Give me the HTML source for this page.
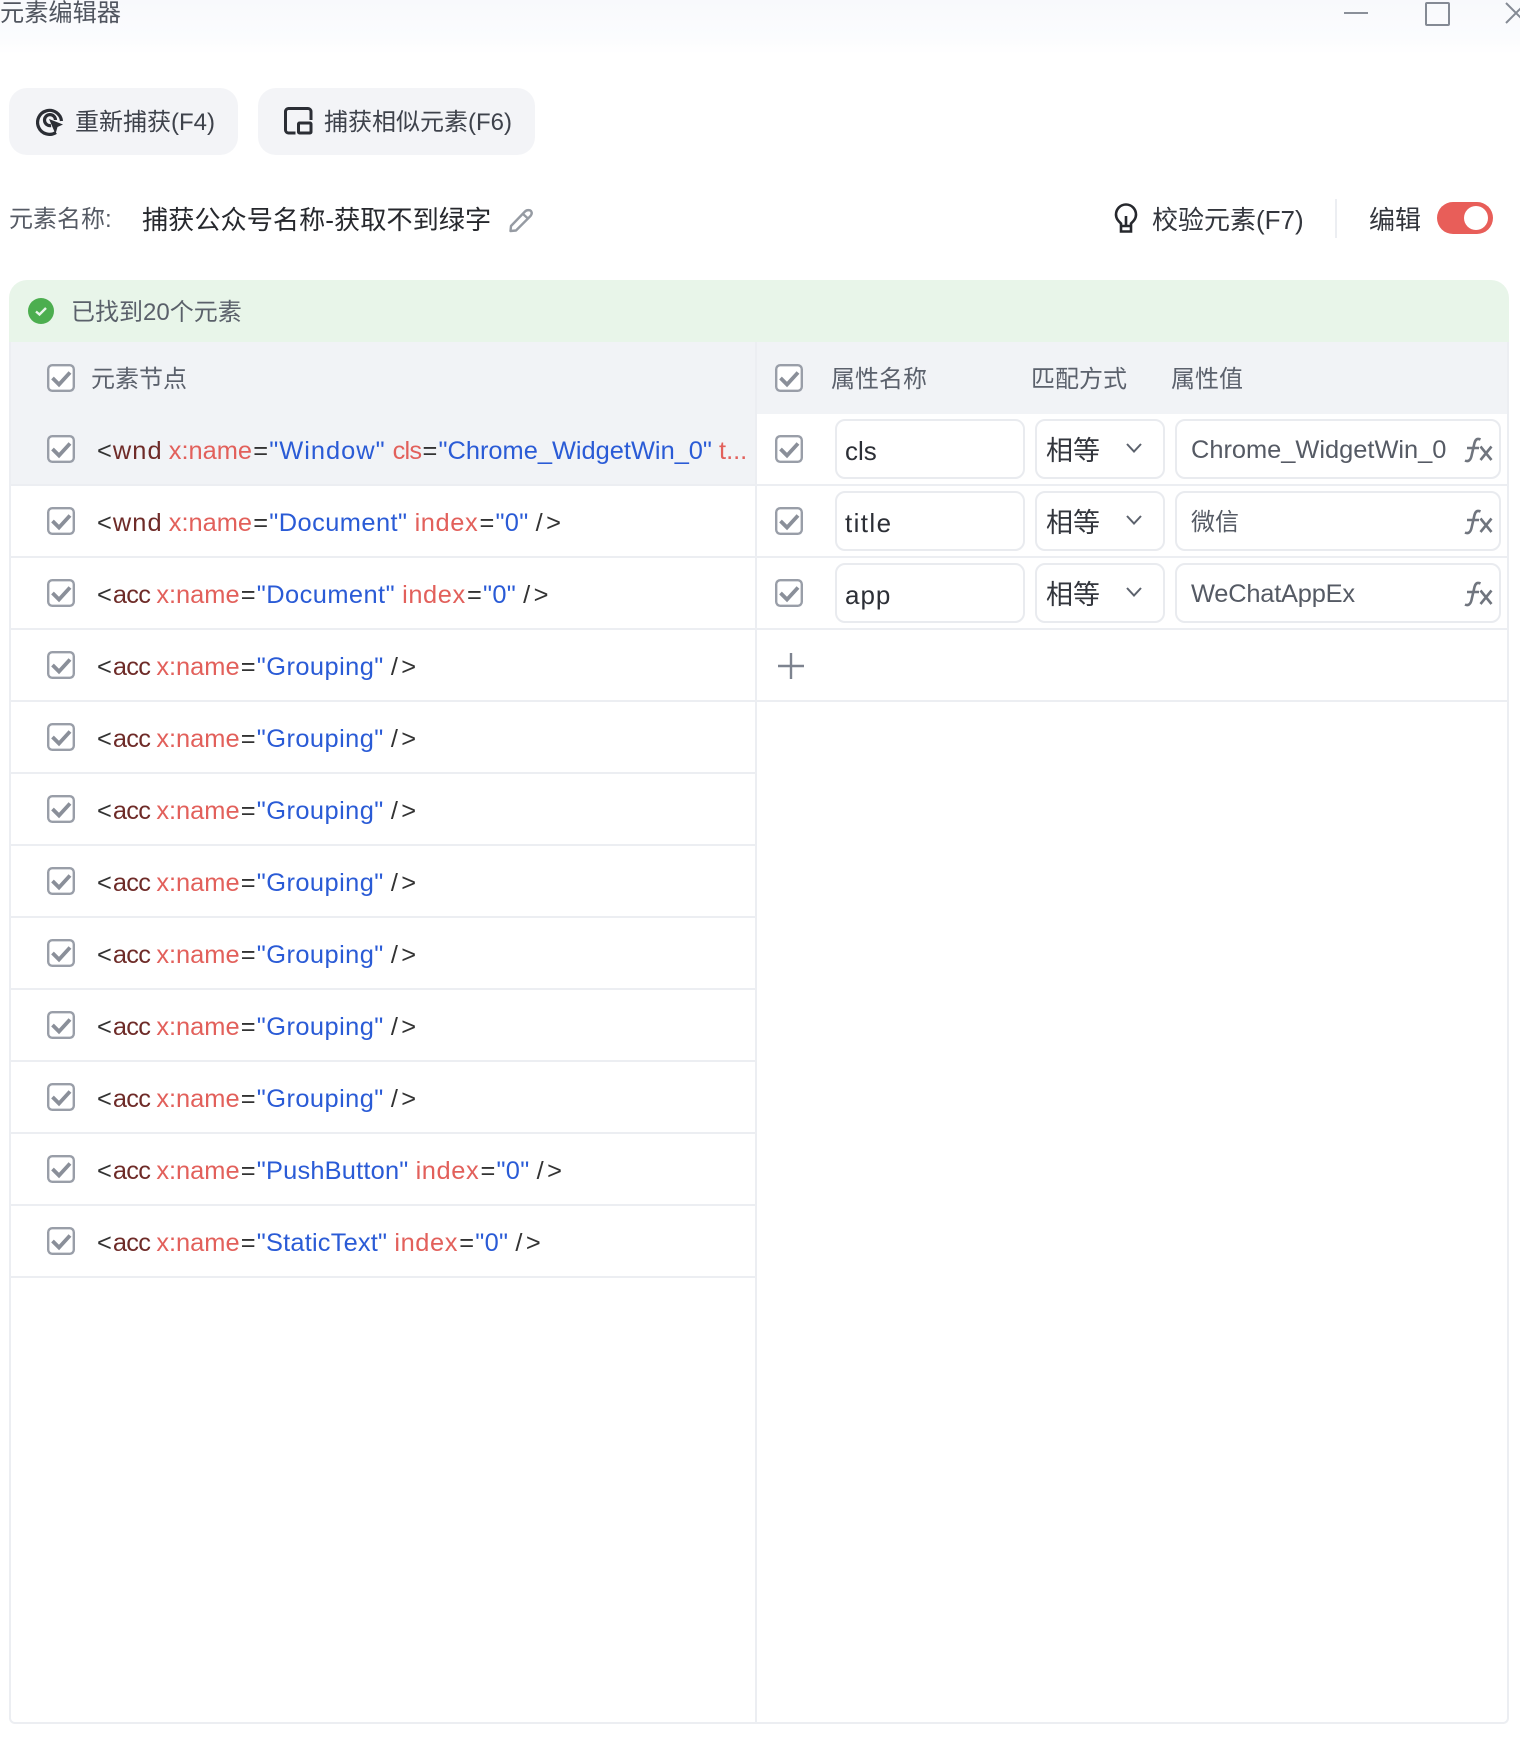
<!DOCTYPE html>
<html lang="zh"><head><meta charset="utf-8"><title>元素编辑器</title>
<style>
html,body{margin:0;padding:0;background:#fff}
body{width:1520px;height:1752px;position:relative;overflow:hidden;font-family:"Liberation Sans","Noto Sans CJK SC",sans-serif;color:#333}
.a{position:absolute;white-space:pre}
.t{position:absolute;white-space:pre;line-height:40px;height:40px}
.btn{position:absolute;top:88px;height:67px;background:#f3f4f7;border-radius:18px}
.line{position:absolute;background:#eceef2}
.row{position:absolute;left:97px;font-size:25.4px;line-height:40px;height:40px;white-space:pre;color:#333}
.row b{font-weight:400;color:#6e2b28;margin:0 -1px 0 1px}
.row b.w{letter-spacing:1.1px}.row b.c{letter-spacing:-.7px}
.row i{font-style:normal;color:#e2605b}
.row i.n{letter-spacing:.6px}.row i.l{letter-spacing:-.8px}
.row u{text-decoration:none;color:#2a5bd6}
.row u.g{letter-spacing:.45px}.row u.k{letter-spacing:.2px}.row u.z{letter-spacing:.3px}.row u.o{letter-spacing:1px}
.row em{font-style:normal;margin:0 1.2px}
.row span{letter-spacing:3.4px}
.cb{position:absolute;width:28px;height:28px}
.inp{position:absolute;height:56px;border:2px solid #e9ebef;border-radius:10px;background:#fff;box-sizing:content-box}
</style></head>
<body>
<svg width="0" height="0" style="position:absolute"><defs>
<symbol id="c" viewBox="0 0 28 28"><rect x="1.200" y="1.200" width="25.600" height="25.600" rx="4" fill="#fff" stroke="#999ea8" stroke-width="2.400"/><path d="M5.500 14l6.500 6.500L23 8.500" fill="none" stroke="#8a8f99" stroke-width="3.800"/></symbol>
<symbol id="fx" viewBox="0 0 30 26"><path d="M17.500 2.500C14 1 12.500 2.500 11.500 6L8.500 19C7.500 23.500 5 25 2 23.500M4 11H16M17.500 9.500L28.500 23M28.500 9.500L17.500 23" fill="none" stroke="#70757e" stroke-width="2.600"/></symbol>
<symbol id="ch" viewBox="0 0 18 12"><path d="M2 2l7 7.500L16 2" fill="none" stroke="#5c626d" stroke-width="2"/></symbol>
</defs></svg>

<div class="a" style="left:0;top:0;width:1520px;height:54px;background:linear-gradient(#f8f9fc,#fbfcfe 70%,#fff)"></div>
<div class="t" style="left:0;top:-6px;font-size:24.200px;color:#50555f">元素编辑器</div>
<div class="line" style="left:1344px;top:12px;width:24px;height:2px;background:#8a8f99"></div>
<div class="a" style="left:1425px;top:2px;width:21px;height:20px;border:2px solid #848a94;border-radius:2px"></div>
<svg class="a" style="left:1500px;top:0" width="20" height="26"><path d="M6 3L26 23M6 23L26 3" stroke="#848a94" stroke-width="2" fill="none"/></svg>

<div class="btn" style="left:9px;width:229px"></div>
<svg class="a" style="left:36px;top:106px" width="28" height="30" viewBox="0 0 28 30"><path d="M20 26.500A12 12 0 1 1 25.500 15" fill="none" stroke="#2b2e35" stroke-width="3.200"/><path d="M15 19.500A5.500 5.500 0 1 1 19.500 14" fill="none" stroke="#2b2e35" stroke-width="3.200"/><path d="M13 13L27 18.500L21.500 21L19.500 28Z" fill="#2b2e35"/></svg>
<div class="t" style="left:75px;top:103px;font-size:24px;color:#3e424b">重新捕获(F4)</div>

<div class="btn" style="left:258px;width:277px"></div>
<svg class="a" style="left:284px;top:107px" width="29" height="29" viewBox="0 0 29 29"><path d="M11.500 26H4.500A3 3 0 0 1 1.500 23V4.500A3 3 0 0 1 4.500 1.500H24A3 3 0 0 1 27 4.500V13" fill="none" stroke="#2b2e35" stroke-width="3"/><rect x="14.500" y="16" width="12.500" height="10" rx="1" fill="none" stroke="#2b2e35" stroke-width="3"/></svg>
<div class="t" style="left:324px;top:103px;font-size:24px;color:#3e424b">捕获相似元素(F6)</div>

<div class="t" style="left:9px;top:200px;font-size:24px;color:#565b65">元素名称:</div>
<div class="t" style="left:142px;top:199.500px;font-size:26.200px;color:#26282d">捕获公众号名称-获取不到绿字</div>
<svg class="a" style="left:508px;top:207px" width="26" height="26" viewBox="0 0 26 26"><path d="M3 19L17 4.500C19 2.500 22 3 23 4C24 5.500 24 7.500 22 9.500L8 23.500L2.500 24Z M15 7L20.500 12" fill="none" stroke="#969ba3" stroke-width="2.400" stroke-linejoin="round"/></svg>

<svg class="a" style="left:1114px;top:203px" width="24" height="32" viewBox="0 0 24 32"><path d="M7 23V20.500C5 18.500 2 16 2 11.500A10 10 0 0 1 22 11.500C22 16 19 18.500 17 20.500V23ZM12 13V23M7 23V28.500H17V23" fill="none" stroke="#26282d" stroke-width="2.600"/></svg>
<div class="t" style="left:1152px;top:199.500px;font-size:26px;color:#33363d">校验元素(F7)</div>
<div class="line" style="left:1335px;top:199px;width:2px;height:39px"></div>
<div class="t" style="left:1369px;top:199.500px;font-size:26px;color:#33363d">编辑</div>
<div class="a" style="left:1437px;top:202px;width:56px;height:32px;border-radius:16px;background:#e85e59"></div>
<div class="a" style="left:1464px;top:206px;width:24px;height:24px;border-radius:50%;background:#fff"></div>

<div class="a" style="left:9px;top:280px;width:1500px;height:62px;background:#e8f5e9;border-radius:18px 18px 0 0"></div>
<svg class="a" style="left:27px;top:297px" width="28" height="28" viewBox="0 0 28 28"><circle cx="14" cy="14" r="13" fill="#4cae4f"/><path d="M9 14.500l3.500 3L19 11" fill="none" stroke="#e8f5e9" stroke-width="2.400"/></svg>
<div class="t" style="left:71px;top:293px;font-size:24px;color:#5a606a">已找到20个元素</div>

<div class="a" style="left:9px;top:342px;width:1496px;height:1380px;border:2px solid #eceef2;border-top:0;border-radius:0 0 6px 6px;box-sizing:content-box"></div>
<div class="a" style="left:11px;top:342px;width:1496px;height:72px;background:#f1f3f6"></div>
<div class="a" style="left:11px;top:414px;width:745px;height:71px;background:#f1f3f6"></div>
<div class="line" style="left:755px;top:342px;width:2px;height:1380px"></div>

<div class="line" style="left:11px;top:483.500px;width:1496px;height:2.500px"></div>
<div class="line" style="left:11px;top:555.500px;width:1496px;height:2.500px"></div>
<div class="line" style="left:11px;top:627.500px;width:1496px;height:2.500px"></div>
<div class="line" style="left:11px;top:699.500px;width:1496px;height:2.500px"></div>
<div class="line" style="left:11px;top:771.500px;width:745px;height:2.500px"></div>
<div class="line" style="left:11px;top:843.500px;width:745px;height:2.500px"></div>
<div class="line" style="left:11px;top:915.500px;width:745px;height:2.500px"></div>
<div class="line" style="left:11px;top:987.500px;width:745px;height:2.500px"></div>
<div class="line" style="left:11px;top:1059.500px;width:745px;height:2.500px"></div>
<div class="line" style="left:11px;top:1131.500px;width:745px;height:2.500px"></div>
<div class="line" style="left:11px;top:1203.500px;width:745px;height:2.500px"></div>
<div class="line" style="left:11px;top:1275.500px;width:745px;height:2.500px"></div>

<svg class="cb" style="left:47px;top:364px"><use href="#c"/></svg>
<div class="t" style="left:91px;top:360px;font-size:24px;color:#5b616c">元素节点</div>
<svg class="cb" style="left:775px;top:364px"><use href="#c"/></svg>
<div class="t" style="left:831px;top:360px;font-size:24px;color:#5b616c">属性名称</div>
<div class="t" style="left:1031px;top:360px;font-size:24px;color:#5b616c">匹配方式</div>
<div class="t" style="left:1171px;top:360px;font-size:24px;color:#5b616c">属性值</div>

<svg class="cb" style="left:47px;top:435px"><use href="#c"/></svg>
<svg class="cb" style="left:47px;top:507px"><use href="#c"/></svg>
<svg class="cb" style="left:47px;top:579px"><use href="#c"/></svg>
<svg class="cb" style="left:47px;top:651px"><use href="#c"/></svg>
<svg class="cb" style="left:47px;top:723px"><use href="#c"/></svg>
<svg class="cb" style="left:47px;top:795px"><use href="#c"/></svg>
<svg class="cb" style="left:47px;top:867px"><use href="#c"/></svg>
<svg class="cb" style="left:47px;top:939px"><use href="#c"/></svg>
<svg class="cb" style="left:47px;top:1011px"><use href="#c"/></svg>
<svg class="cb" style="left:47px;top:1083px"><use href="#c"/></svg>
<svg class="cb" style="left:47px;top:1155px"><use href="#c"/></svg>
<svg class="cb" style="left:47px;top:1227px"><use href="#c"/></svg>

<div class="row" style="top:431px">&lt;<b class="w">wnd</b> <i>x:name</i><em>=</em><u class="o">"Window"</u> <i class="l">cls</i><em>=</em><u>"Chrome_WidgetWin_0"</u> <i>t...</i></div>
<div class="row" style="top:503px">&lt;<b class="w">wnd</b> <i>x:name</i><em>=</em><u class="g">"Document"</u> <i class="n">index</i><em>=</em><u class="z">"0"</u> <span>/</span>&gt;</div>
<div class="row" style="top:575px">&lt;<b class="c">acc</b> <i>x:name</i><em>=</em><u class="g">"Document"</u> <i class="n">index</i><em>=</em><u class="z">"0"</u> <span>/</span>&gt;</div>
<div class="row" style="top:647px">&lt;<b class="c">acc</b> <i>x:name</i><em>=</em><u class="g">"Grouping"</u> <span>/</span>&gt;</div>
<div class="row" style="top:719px">&lt;<b class="c">acc</b> <i>x:name</i><em>=</em><u class="g">"Grouping"</u> <span>/</span>&gt;</div>
<div class="row" style="top:791px">&lt;<b class="c">acc</b> <i>x:name</i><em>=</em><u class="g">"Grouping"</u> <span>/</span>&gt;</div>
<div class="row" style="top:863px">&lt;<b class="c">acc</b> <i>x:name</i><em>=</em><u class="g">"Grouping"</u> <span>/</span>&gt;</div>
<div class="row" style="top:935px">&lt;<b class="c">acc</b> <i>x:name</i><em>=</em><u class="g">"Grouping"</u> <span>/</span>&gt;</div>
<div class="row" style="top:1007px">&lt;<b class="c">acc</b> <i>x:name</i><em>=</em><u class="g">"Grouping"</u> <span>/</span>&gt;</div>
<div class="row" style="top:1079px">&lt;<b class="c">acc</b> <i>x:name</i><em>=</em><u class="g">"Grouping"</u> <span>/</span>&gt;</div>
<div class="row" style="top:1151px">&lt;<b class="c">acc</b> <i>x:name</i><em>=</em><u class="k">"PushButton"</u> <i class="n">index</i><em>=</em><u class="z">"0"</u> <span>/</span>&gt;</div>
<div class="row" style="top:1223px">&lt;<b class="c">acc</b> <i>x:name</i><em>=</em><u class="k">"StaticText"</u> <i class="n">index</i><em>=</em><u class="z">"0"</u> <span>/</span>&gt;</div>

<svg class="cb" style="left:775px;top:435px"><use href="#c"/></svg>
<div class="inp" style="left:835px;top:419px;width:186px"></div>
<div class="t" style="left:845px;top:431px;font-size:26px;color:#2c2f36">cls</div>
<div class="inp" style="left:1035px;top:419px;width:126px"></div>
<div class="t" style="left:1046px;top:431px;font-size:27px;color:#33363d">相等</div>
<svg class="a" style="left:1125px;top:442px" width="18" height="12"><use href="#ch"/></svg>
<div class="inp" style="left:1175px;top:419px;width:322px"></div>
<div class="t" style="left:1191px;top:430px;font-size:25.400px;color:#555a64">Chrome_WidgetWin_0</div>
<svg class="a" style="left:1463px;top:437px" width="30" height="26"><use href="#fx"/></svg>

<svg class="cb" style="left:775px;top:507px"><use href="#c"/></svg>
<div class="inp" style="left:835px;top:491px;width:186px"></div>
<div class="t" style="left:845px;top:503px;font-size:26px;letter-spacing:1.400px;color:#2c2f36">title</div>
<div class="inp" style="left:1035px;top:491px;width:126px"></div>
<div class="t" style="left:1046px;top:503px;font-size:27px;color:#33363d">相等</div>
<svg class="a" style="left:1125px;top:514px" width="18" height="12"><use href="#ch"/></svg>
<div class="inp" style="left:1175px;top:491px;width:322px"></div>
<div class="t" style="left:1191px;top:503px;font-size:24px;color:#555a64">微信</div>
<svg class="a" style="left:1463px;top:509px" width="30" height="26"><use href="#fx"/></svg>

<svg class="cb" style="left:775px;top:579px"><use href="#c"/></svg>
<div class="inp" style="left:835px;top:563px;width:186px"></div>
<div class="t" style="left:845px;top:575px;font-size:26px;letter-spacing:1px;color:#2c2f36">app</div>
<div class="inp" style="left:1035px;top:563px;width:126px"></div>
<div class="t" style="left:1046px;top:575px;font-size:27px;color:#33363d">相等</div>
<svg class="a" style="left:1125px;top:586px" width="18" height="12"><use href="#ch"/></svg>
<div class="inp" style="left:1175px;top:563px;width:322px"></div>
<div class="t" style="left:1191px;top:574px;font-size:25.400px;letter-spacing:-.2px;color:#555a64">WeChatAppEx</div>
<svg class="a" style="left:1463px;top:581px" width="30" height="26"><use href="#fx"/></svg>

<svg class="a" style="left:777px;top:652px" width="28" height="28"><path d="M14 1V27M1 14H27" stroke="#7d838f" stroke-width="2.400" fill="none"/></svg>
</body></html>
